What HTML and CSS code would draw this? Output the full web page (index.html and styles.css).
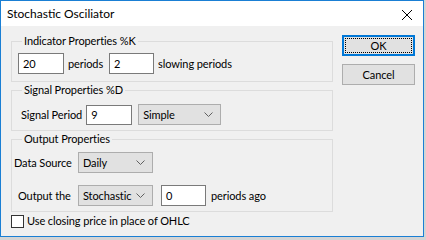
FILE: index.html
```html
<!DOCTYPE html>
<html>
<head>
<meta charset="utf-8">
<link rel="stylesheet" href="styles.css">
</head>
<body>
<div class="window">
  <div class="titlebar">
    <span class="title">Stochastic Osciliator</span>
    <svg class="close" width="12" height="12" viewBox="0 0 12 12"><path d="M1 1 L11 11 M11 1 L1 11" stroke="#000" stroke-width="1" fill="none"/></svg>
  </div>
  <div class="client">
    <div class="main">
      <fieldset class="group g1">
        <legend>Indicator Properties %K</legend>
        <div class="row">
          <div class="edit w46 ml6">20</div>
          <span class="txt ml4">periods</span>
          <div class="edit w45 ml6">2</div>
          <span class="txt ml4">slowing periods</span>
        </div>
      </fieldset>
      <fieldset class="group g2">
        <legend>Signal Properties %D</legend>
        <div class="row">
          <span class="txt ml9">Signal Period</span>
          <div class="edit w46 ml4 h20">9</div>
          <div class="combo w83 ml6"><span>Simple</span><svg class="chev" width="9" height="5" viewBox="0 0 9 5"><path d="M0.5 0.5 L4.5 4.5 L8.5 0.5" stroke="#606060" fill="none"/></svg></div>
        </div>
      </fieldset>
      <fieldset class="group g3">
        <legend>Output Properties</legend>
        <div class="row">
          <span class="txt lbl-ds">Data Source</span>
          <div class="combo w75"><span>Daily</span><svg class="chev" width="9" height="5" viewBox="0 0 9 5"><path d="M0.5 0.5 L4.5 4.5 L8.5 0.5" stroke="#606060" fill="none"/></svg></div>
        </div>
        <div class="row r2">
          <span class="txt lbl-out">Output the</span>
          <div class="combo w75"><span>Stochastic</span><svg class="chev" width="9" height="5" viewBox="0 0 9 5"><path d="M0.5 0.5 L4.5 4.5 L8.5 0.5" stroke="#606060" fill="none"/></svg></div>
          <div class="edit w45 ml8">0</div>
          <span class="txt ml5">periods ago</span>
        </div>
      </fieldset>
      <label class="check"><span class="box"></span><span class="txt">Use closing price in place of OHLC</span></label>
    </div>
    <div class="buttons">
      <button class="btn default"><span class="focus">OK</span></button>
      <button class="btn">Cancel</button>
    </div>
  </div>
</div>
</body>
</html>
```
FILE: styles.css
```css
html, body {
  margin: 0;
  padding: 0;
  background: #d4d4d4;
}
body {
  font-family: Lato, "Noto Sans", sans-serif;
  font-size: 11px;
  letter-spacing: -0.1px;
  color: #000;
  width: 426px;
  height: 240px;
  overflow: hidden;
}
.window {
  box-sizing: border-box;
  width: 424px;
  height: 237px;
  border: 1px solid #1a7fd4;
  background: #f0f0f0;
  display: flex;
  flex-direction: column;
}
.titlebar {
  height: 25px;
  background: #fff;
  display: flex;
  align-items: center;
  justify-content: space-between;
  padding: 0 10px 0 6px;
  flex: none;
}
.title {
  font-size: 12px;
  letter-spacing: 0;
  line-height: 14px;
  margin-top: 1px;
}
.close {
  display: block;
  margin-top: 2px;
}
.client {
  display: flex;
  align-items: flex-start;
  padding: 0 0 0 10px;
}
.main {
  width: 322px;
  display: flex;
  flex-direction: column;
}
.group {
  margin: 0;
  padding: 0;
  border: 1px solid #dcdcdc;
  min-width: 0;
}
.group legend {
  margin-left: 10px;
  padding: 0 2px;
  line-height: 14px;
  height: 14px;
}
.g1 { margin-top: 8px; padding-top: 5px; padding-bottom: 7px; }
.g2 { margin-top: 1px; padding-top: 7px; padding-bottom: 5px; }
.g3 { margin-top: 1px; padding-top: 6px; padding-bottom: 5px; }
.row {
  display: flex;
  align-items: center;
  height: 21px;
}
.r2 { margin-top: 12px; }
.txt {
  line-height: 14px;
  white-space: nowrap;
}
.lbl-ds { width: 64px; margin-left: 2px; flex: none; }
.lbl-out { width: 60px; margin-left: 6px; flex: none; }
.ml4 { margin-left: 4px; }
.ml5 { margin-left: 5px; }
.ml6 { margin-left: 6px; }
.ml8 { margin-left: 8px; }
.ml9 { margin-left: 9px; }
.w45 { width: 45px; }
.w46 { width: 46px; }
.w75 { width: 75px; }
.w83 { width: 83px; }
.edit {
  box-sizing: border-box;
  height: 21px;
  background: #fff;
  border: 1px solid #7a7a7a;
  padding: 0 4px;
  line-height: 19px;
  flex: none;
}
.h20 { height: 20px; line-height: 18px; }
.combo {
  box-sizing: border-box;
  height: 21px;
  background: #e1e1e1;
  border: 1px solid #adadad;
  padding: 0 7px 0 4px;
  display: flex;
  align-items: center;
  justify-content: space-between;
  flex: none;
}
.chev { display: block; }
.check {
  display: flex;
  align-items: center;
  margin-top: 2px;
  margin-left: 0;
  height: 14px;
}
.box {
  box-sizing: border-box;
  width: 13px;
  height: 13px;
  border: 1px solid #333;
  background: #fff;
  margin-right: 3px;
}
.buttons {
  display: flex;
  flex-direction: column;
  margin-left: 9px;
  margin-top: 9px;
  gap: 8px;
}
.btn {
  box-sizing: border-box;
  width: 73px;
  height: 21px;
  margin: 0;
  padding: 0;
  font: inherit;
  letter-spacing: inherit;
  color: #000;
  background: #e1e1e1;
  border: 1px solid #adadad;
  display: flex;
  align-items: center;
  justify-content: center;
}
.btn.default {
  border: 2px solid #0078d7;
  padding: 1px;
}
.focus {
  box-sizing: border-box;
  width: 100%;
  height: 100%;
  border: 1px dotted #000;
  display: flex;
  align-items: center;
  justify-content: center;
}
```
